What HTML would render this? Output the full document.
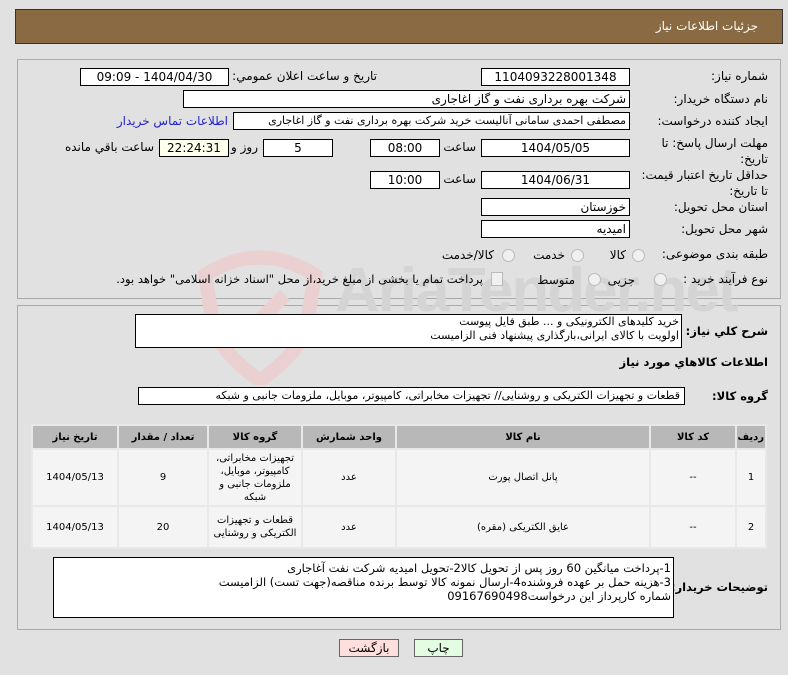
<!DOCTYPE html>
<html><head><meta charset="utf-8"><style>
body{margin:0;width:788px;height:675px;background:#e1e1e1;font-family:"DejaVu Sans",sans-serif;font-size:11px;color:#000;position:relative;overflow:hidden}
.a{position:absolute;white-space:nowrap}
.box{position:absolute;background:#fff;border:1px solid #000;box-sizing:border-box;direction:rtl;text-align:center;line-height:16px;font-size:12px;overflow:hidden;white-space:nowrap}
.l{position:absolute;direction:rtl;text-align:right;white-space:nowrap;font-size:12px}
.b{font-weight:bold;font-size:11.5px;letter-spacing:-0.3px}
.panel{position:absolute;border:1px solid #aaa;box-sizing:border-box;left:17px;width:764px}
table{position:absolute;left:31px;top:424px;width:736px;table-layout:fixed;border-collapse:separate;border-spacing:2px;background:#e8e8e8;direction:rtl;font-size:10px}
th{background:#b8b8b8;height:20px;font-weight:bold}
td{background:#f4f4f4;text-align:center;line-height:13px}
.rad{position:absolute;width:11px;height:11px;border:1px solid #bbb;border-radius:50%;background:#f0f0f0}
</style></head><body>
<div class="a" style="left:15px;top:9px;width:768px;height:35px;background:#8a6a42;border:1px solid #333;box-sizing:border-box"></div>
<div class="l" style="right:30px;top:19px;color:#fff;font-size:12px">جزئيات اطلاعات نياز</div>

<div class="panel" style="top:59px;height:240px"></div>
<div class="panel" style="top:305px;height:325px"></div>

<svg class="a" style="left:195px;top:245px" width="130" height="140" viewBox="0 0 130 140"><path d="M10 30 Q65 -5 120 30 L110 90 Q90 120 65 135 Q40 120 20 90 Z" fill="none" stroke="#ead0d0" stroke-width="14"/><path d="M45 85 L85 45 L95 55 L55 95 Z" fill="#ead0d0"/></svg>
<div class="a" style="left:335px;top:255px;font-size:62px;font-weight:bold;color:#d4d4d4;font-family:'Liberation Sans',sans-serif;letter-spacing:-2px">AriaTender.net</div>

<div class="l" style="right:20px;top:69px">شماره نیاز:</div>
<div class="box" style="left:481px;top:68px;width:149px;height:18px">1104093228001348</div>
<div class="l" style="right:411px;top:69px">تاريخ و ساعت اعلان عمومي:</div>
<div class="box" style="left:80px;top:68px;width:149px;height:18px">1404/04/30 - 09:09</div>

<div class="l" style="right:20px;top:92px">نام دستگاه خریدار:</div>
<div class="box" style="left:183px;top:90px;width:447px;height:18px;text-align:right;padding-right:3px">شرکت بهره برداری نفت و گاز اغاجاری</div>

<div class="l" style="right:20px;top:114px">ایجاد کننده درخواست:</div>
<div class="box" style="left:233px;top:112px;width:397px;height:18px;text-align:right;padding-right:3px;font-size:11px">مصطفی احمدی سامانی آنالیست خرید شرکت بهره برداری نفت و گاز اغاجاری</div>
<div class="l" style="right:560px;top:114px;color:#2222cc">اطلاعات تماس خریدار</div>

<div class="l" style="right:20px;top:135px;line-height:16px">مهلت ارسال پاسخ: تا<br>تاریخ:</div>
<div class="box" style="left:481px;top:139px;width:149px;height:18px">1404/05/05</div>
<div class="l" style="right:312px;top:140px">ساعت</div>
<div class="box" style="left:370px;top:139px;width:70px;height:18px">08:00</div>
<div class="box" style="left:263px;top:139px;width:70px;height:18px">5</div>
<div class="l" style="right:530px;top:140px">روز و</div>
<div class="box" style="left:159px;top:139px;width:70px;height:18px;background:#ffffee">22:24:31</div>
<div class="l" style="right:634px;top:140px">ساعت باقي مانده</div>

<div class="l" style="right:20px;top:167px;line-height:16px">حداقل تاریخ اعتبار قیمت:<br>تا تاریخ:</div>
<div class="box" style="left:481px;top:171px;width:149px;height:18px">1404/06/31</div>
<div class="l" style="right:312px;top:172px">ساعت</div>
<div class="box" style="left:370px;top:171px;width:70px;height:18px">10:00</div>

<div class="l" style="right:20px;top:200px">استان محل تحویل:</div>
<div class="box" style="left:481px;top:198px;width:149px;height:18px;text-align:right;padding-right:3px">خوزستان</div>
<div class="l" style="right:20px;top:222px">شهر محل تحویل:</div>
<div class="box" style="left:481px;top:220px;width:149px;height:18px;text-align:right;padding-right:3px">امیدیه</div>

<div class="l" style="right:20px;top:247px">طبقه بندی موضوعی:</div>
<div class="rad" style="left:632px;top:249px"></div><div class="l" style="right:162px;top:248px">کالا</div>
<div class="rad" style="left:571px;top:249px"></div><div class="l" style="right:223px;top:248px">خدمت</div>
<div class="rad" style="left:502px;top:249px"></div><div class="l" style="right:294px;top:248px">کالا/خدمت</div>

<div class="l" style="right:20px;top:272px">نوع فرآیند خرید :</div>
<div class="rad" style="left:654px;top:273px"></div><div class="l" style="right:153px;top:273px">جزیی</div>
<div class="rad" style="left:588px;top:273px"></div><div class="l" style="right:213px;top:273px">متوسط</div>
<div class="a" style="left:491px;top:272px;width:10px;height:12px;border:1px solid #bbb;background:#f0f0f0"></div>
<div class="l" style="right:305px;top:272px;font-size:11.5px">پرداخت تمام یا بخشی از مبلغ خرید،از محل "اسناد خزانه اسلامی" خواهد بود.</div>

<div class="l b" style="right:20px;top:324px">شرح كلي نياز:</div>
<div class="box" style="left:135px;top:314px;width:547px;height:34px;text-align:right;padding-right:2px;line-height:14px;font-size:11px">خرید کلیدهای الکترونیکی و ... طبق فایل پیوست<br>اولویت با کالای ایرانی،بارگذاری پیشنهاد فنی الزامیست</div>
<div class="l b" style="right:20px;top:355px">اطلاعات كالاهاي مورد نياز</div>

<div class="l b" style="right:20px;top:389px">گروه کالا:</div>
<div class="box" style="left:138px;top:387px;width:547px;height:18px;text-align:right;padding-right:4px;font-size:11px">قطعات و تجهیزات الکتریکی و روشنایی// تجهیزات مخابراتی، کامپیوتر، موبایل، ملزومات جانبی و شبکه</div>

<table>
<tr><th style="width:26px">ردیف</th><th style="width:82px">کد کالا</th><th style="width:250px">نام کالا</th><th style="width:90px">واحد شمارش</th><th style="width:90px">گروه کالا</th><th style="width:86px">تعداد / مقدار</th><th>تاریخ نیاز</th></tr>
<tr style="height:55px"><td>1</td><td>--</td><td>پانل اتصال پورت</td><td>عدد</td><td>تجهیزات مخابراتی، کامپیوتر، موبایل، ملزومات جانبی و شبکه</td><td>9</td><td>1404/05/13</td></tr>
<tr style="height:40px"><td>2</td><td>--</td><td>عایق الکتریکی (مقره)</td><td>عدد</td><td>قطعات و تجهیزات الکتریکی و روشنایی</td><td>20</td><td>1404/05/13</td></tr>
</table>

<div class="l b" style="right:20px;top:580px">توضیحات خریدار:</div>
<div class="box" style="left:53px;top:557px;width:621px;height:61px;text-align:right;padding-right:2px;line-height:14px;font-size:11.5px;padding-top:3px;white-space:normal">1-پرداخت میانگین 60 روز پس از تحویل کالا2-تحویل امیدیه شرکت نفت آغاجاری<br>3-هزینه حمل بر عهده فروشنده4-ارسال نمونه کالا توسط برنده مناقصه(جهت تست) الزامیست<br>شماره کارپرداز این درخواست09167690498</div>

<div class="box" style="left:339px;top:639px;width:60px;height:18px;background:#ffdede;border-color:#666">بازگشت</div>
<div class="box" style="left:414px;top:639px;width:49px;height:18px;background:#e2fde2;border-color:#666">چاپ</div>
</body></html>
